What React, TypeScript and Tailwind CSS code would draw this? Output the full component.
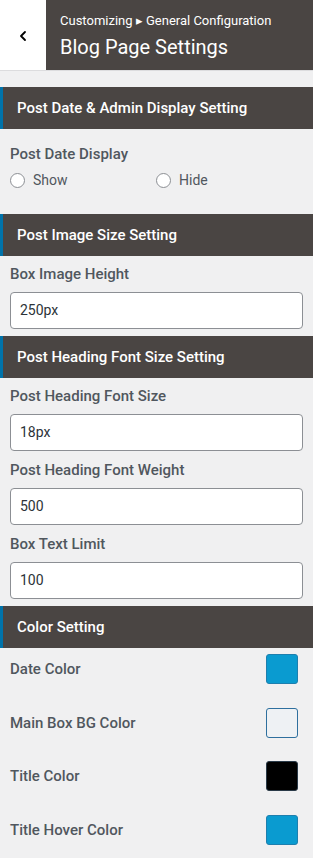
import { ChevronLeft } from 'lucide-react';

function SectionHeader({ title }: { title: string }) {
  return (
    <div className="flex h-[42px] items-center border-l-[3px] border-[#0073aa] bg-[#4a4543] pl-[14px] text-[15px] font-medium text-white">
      {title}
    </div>
  );
}

function Label({ text }: { text: string }) {
  return <div className="text-[15px] leading-[20px] font-medium text-[#50575e]">{text}</div>;
}

function TextField({ label, value, first }: { label: string; value: string; first?: boolean }) {
  return (
    <div className={first ? 'pt-[8px]' : 'pt-[9px]'}>
      <Label text={label} />
      <div className="mt-[8px] flex h-[37px] items-center rounded-[4px] border border-[#8c8f94] bg-white pl-[9px] text-[14px] text-[#2c3338]">
        {value}
      </div>
    </div>
  );
}

function Radio({ label }: { label: string }) {
  return (
    <label className="flex items-center gap-[8px] text-[14px] text-[#50575e]">
      <span className="h-[15px] w-[15px] rounded-full border border-[#8c8f94] bg-white" />
      {label}
    </label>
  );
}

function ColorRow({ label, swatch }: { label: string; swatch: string }) {
  return (
    <div className="flex h-[30px] items-center justify-between pr-[5px]">
      <Label text={label} />
      <span className={`h-[30px] w-[32px] rounded-[3px] border ${swatch}`} />
    </div>
  );
}

export default function App() {
  return (
    <div className="min-h-[858px] w-[313px] bg-[#f0f0f1] font-['Roboto',sans-serif]">
      {/* Header */}
      <div className="flex h-[71px] border-b border-[#dcdcde]">
        <div className="flex w-[46px] items-center justify-center bg-white pt-[2px]">
          <ChevronLeft size={16} strokeWidth={2.75} className="text-black" />
        </div>
        <div className="flex-1 bg-[#4a4543] pl-[14px] pt-[12px] text-white">
          <div className="text-[13px] leading-[18px]">Customizing ▸ General Configuration</div>
          <div className="mt-[4px] text-[20px] leading-[26px]">Blog Page Settings</div>
        </div>
      </div>

      <div className="pt-[16px]">
        <SectionHeader title="Post Date & Admin Display Setting" />
        <div className="px-[10px] pt-[15px] pb-[24px]">
          <Label text="Post Date Display" />
          <div className="mt-[6px] grid h-[20px] grid-cols-[146px_1fr]">
            <Radio label="Show" />
            <Radio label="Hide" />
          </div>
        </div>

        <SectionHeader title="Post Image Size Setting" />
        <div className="px-[10px] pb-[7px]">
          <TextField first label="Box Image Height" value="250px" />
        </div>

        <SectionHeader title="Post Heading Font Size Setting" />
        <div className="px-[10px] pb-[7px]">
          <TextField first label="Post Heading Font Size" value="18px" />
          <TextField label="Post Heading Font Weight" value="500" />
          <TextField label="Box Text Limit" value="100" />
        </div>

        <SectionHeader title="Color Setting" />
        <div className="flex flex-col gap-[23.5px] px-[10px] pt-[6px] pb-[12px]">
          <ColorRow label="Date Color" swatch="border-[#1e7fae] bg-[#0a9bd0]" />
          <ColorRow label="Main Box BG Color" swatch="border-[#2e6f9e] bg-[#eef1f4]" />
          <ColorRow label="Title Color" swatch="border-[#2a3a48] bg-black" />
          <ColorRow label="Title Hover Color" swatch="border-[#1e7fae] bg-[#0a9bd0]" />
        </div>
      </div>
    </div>
  );
}
